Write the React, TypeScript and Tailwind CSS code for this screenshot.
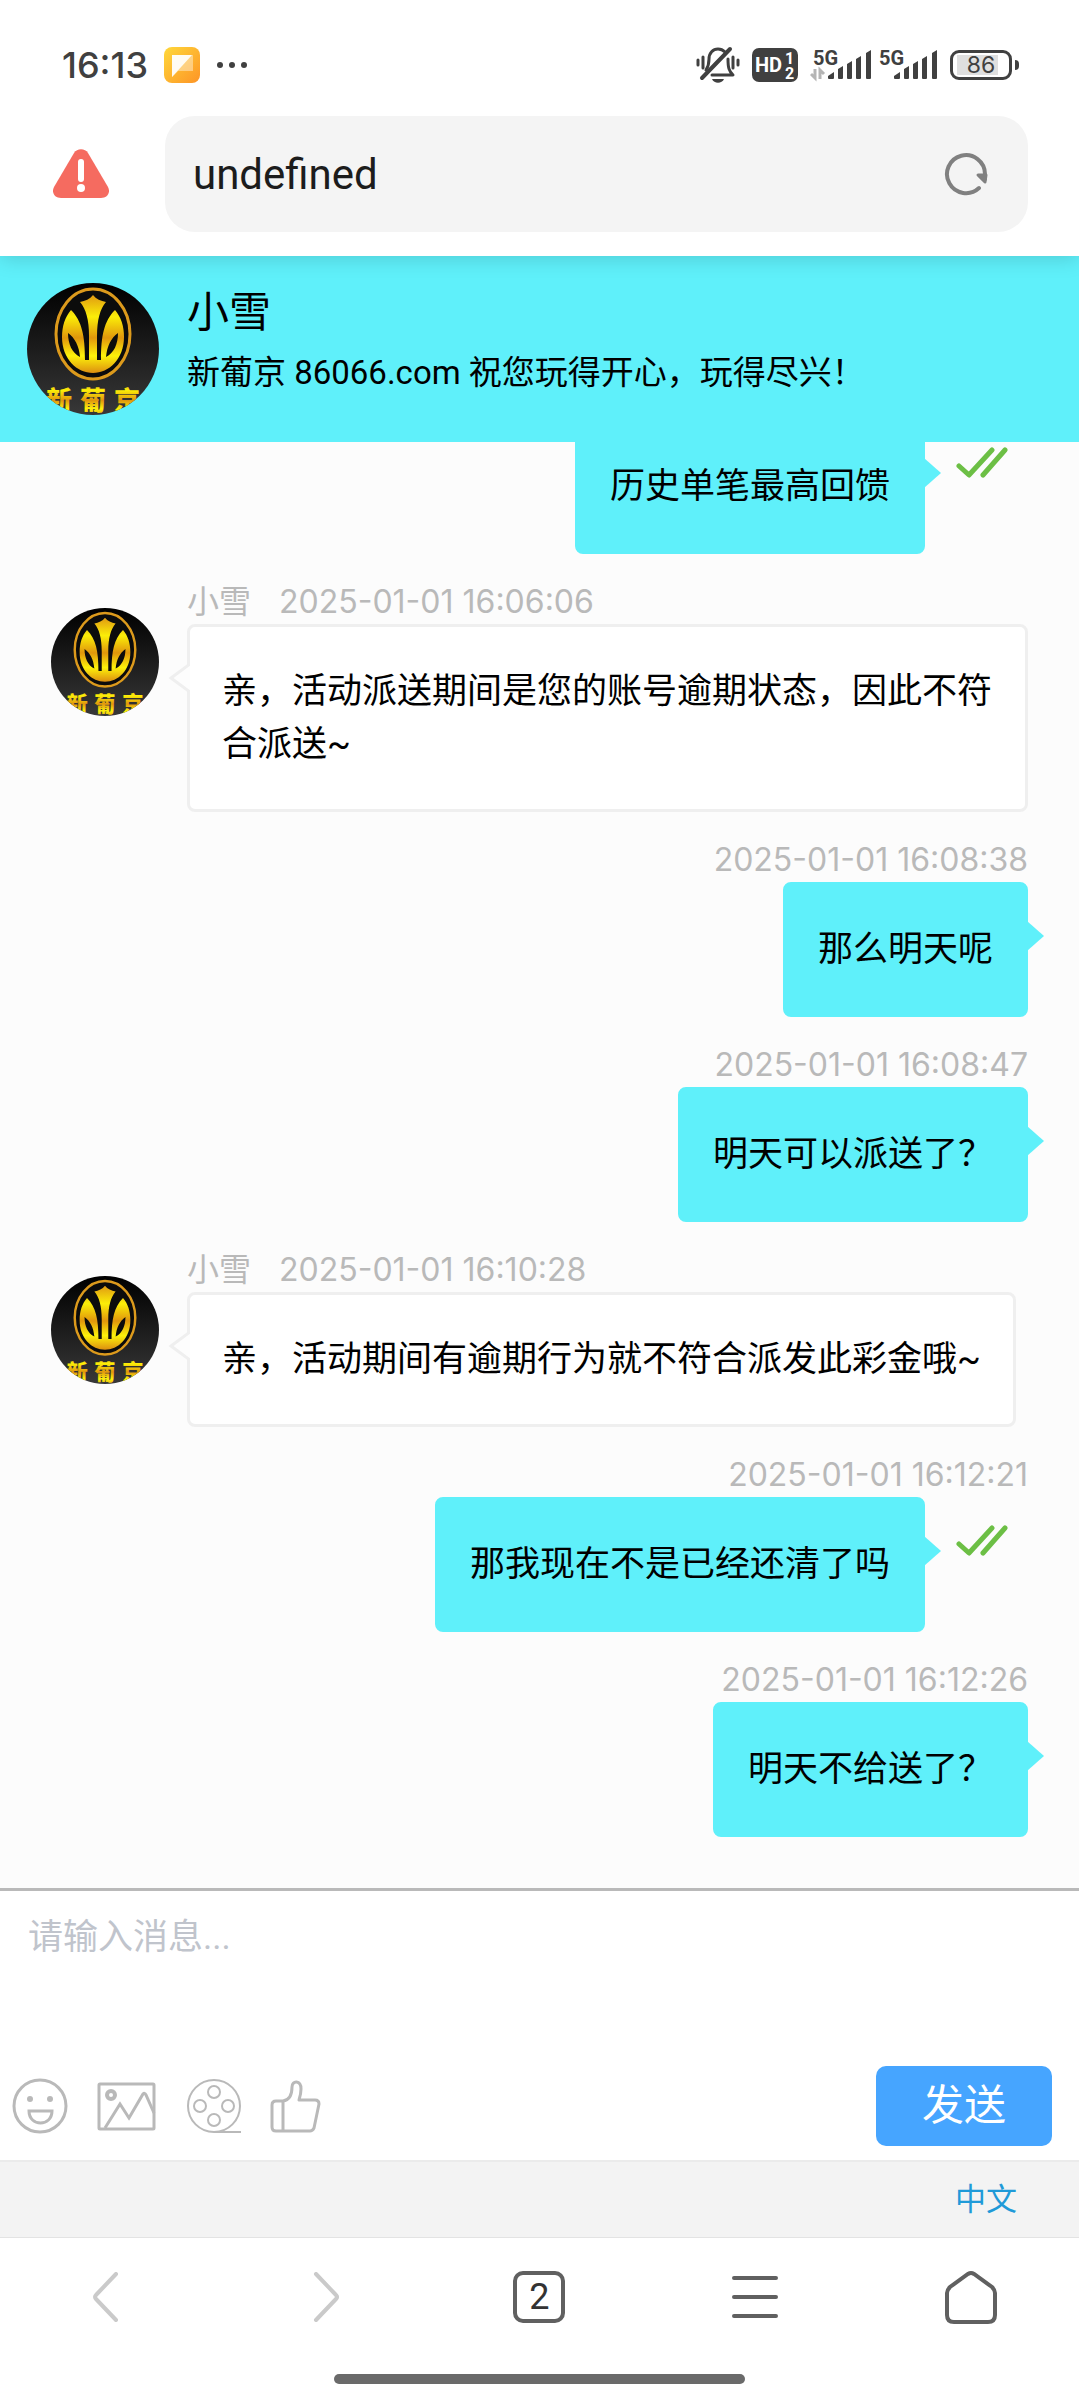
import { useId } from "react";
import clsx from "clsx";

type Message = {
  id: number;
  from: "agent" | "me";
  text: string;
  time?: string;
  read?: boolean;
};

const AGENT_NAME = "小雪";

const messages: Message[] = [
  { id: 1, from: "me", text: "历史单笔最高回馈", read: true },
  {
    id: 2,
    from: "agent",
    text: "亲，活动派送期间是您的账号逾期状态，因此不符合派送~",
    time: "2025-01-01 16:06:06",
  },
  { id: 3, from: "me", text: "那么明天呢", time: "2025-01-01 16:08:38" },
  { id: 4, from: "me", text: "明天可以派送了？", time: "2025-01-01 16:08:47" },
  {
    id: 5,
    from: "agent",
    text: "亲，活动期间有逾期行为就不符合派发此彩金哦~",
    time: "2025-01-01 16:10:28",
  },
  {
    id: 6,
    from: "me",
    text: "那我现在不是已经还清了吗",
    time: "2025-01-01 16:12:21",
    read: true,
  },
  { id: 7, from: "me", text: "明天不给送了？", time: "2025-01-01 16:12:26" },
];

function Avatar({ className }: { className?: string }) {
  const id = useId();
  const gold = `${id}-gold`;
  const night = `${id}-night`;
  return (
    <svg
      viewBox="0 0 132 132"
      className={clsx("shrink-0 rounded-full", className)}
      aria-hidden="true"
    >
      <defs>
        <linearGradient id={gold} x1="0" y1="0" x2="0" y2="1">
          <stop offset="0" stopColor="#e09a12" />
          <stop offset="0.28" stopColor="#fbee08" />
          <stop offset="0.55" stopColor="#e0960c" />
          <stop offset="0.78" stopColor="#fdf20a" />
          <stop offset="1" stopColor="#dc8f10" />
        </linearGradient>
        <linearGradient id={night} x1="0" y1="0" x2="0" y2="1">
          <stop offset="0" stopColor="#000" />
          <stop offset="1" stopColor="#383838" />
        </linearGradient>
      </defs>
      <rect width="132" height="132" fill={`url(#${night})`} />
      <ellipse
        cx="66"
        cy="51"
        rx="37"
        ry="45"
        fill="#0c0c0c"
        stroke="#dc9a1c"
        strokeWidth="3"
      />
      <path
        fill={`url(#${gold})`}
        d="M66 12c3 4 8 6 13 7-6 7-9 18-9 34v24h4c0-24 3-39 14-50 6 7 9 16 9 27 0 22-15 36-31 36S35 76 35 54c0-11 3-20 9-27 11 11 14 26 14 50h4V53c0-16-3-27-9-34 5-1 10-3 13-7z"
      />
      <path
        fill="#0c0c0c"
        d="M41 50c7 5 11 13 12 24-8-4-12-13-12-24zM91 50c-7 5-11 13-12 24 8-4 12-13 12-24z"
      />
      <g
        fill={`url(#${gold})`}
        fontFamily='"Noto Sans CJK SC", sans-serif'
        fontWeight="900"
        fontSize="26"
        textAnchor="middle"
      >
        <text x="32" y="127">
          新
        </text>
        <text x="66" y="127">
          葡
        </text>
        <text x="100" y="127">
          京
        </text>
      </g>
    </svg>
  );
}

function SignalIcon({ transfer }: { transfer?: boolean }) {
  return (
    <svg width="62" height="42" viewBox="0 -4 62 42" fill="#404040">
      <text
        x="3"
        y="17"
        fontFamily="Roboto, sans-serif"
        fontWeight="700"
        fontSize="20"
      >
        5G
      </text>
      {transfer ? (
        <path
          d="M5 21v9L1 26M10 31v-9l4 4"
          fill="none"
          stroke="#b5b5b5"
          strokeWidth="3"
        />
      ) : null}
      <path d="M18 28l6-4v6q0 1-1 1h-4q-1 0-1-1zM28 21l5-3v12q0 1-1 1h-3q-1 0-1-1zM37 16l5-3v17q0 1-1 1h-3q-1 0-1-1zM46 11l5-3v22q0 1-1 1h-3q-1 0-1-1zM56 5l5-3v28q0 1-1 1h-3q-1 0-1-1z" />
    </svg>
  );
}

function StatusBar() {
  return (
    <div className="flex h-[116px] items-center justify-between pt-[14px] pr-[60px] pl-[62px] text-[#404040]">
      <div className="flex items-center">
        <span className="font-[Inter] text-[36px] leading-[40px] font-medium">
          16:13
        </span>
        <svg
          className="ml-4"
          width="36"
          height="36"
          viewBox="0 0 36 36"
          aria-hidden="true"
        >
          <defs>
            <linearGradient id="note" x1="0" y1="0" x2="1" y2="1">
              <stop offset="0" stopColor="#ffd83a" />
              <stop offset="1" stopColor="#fd9426" />
            </linearGradient>
          </defs>
          <rect width="36" height="36" rx="8" fill="url(#note)" />
          <path d="M8 8h21v16H14l-6 6z" fill="#fff" opacity="0.4" />
          <path d="M8 8h20L8 30z" fill="#fff" opacity="0.9" />
        </svg>
        <svg className="ml-4" width="32" height="8" fill="#404040">
          <circle cx="4" cy="4" r="3" />
          <circle cx="16" cy="4" r="3" />
          <circle cx="28" cy="4" r="3" />
        </svg>
      </div>
      <div className="flex items-center">
        <svg width="44" height="38" viewBox="0 0 44 38" fill="none">
          <g stroke="#404040" strokeWidth="3" strokeLinecap="round">
            <path d="M2 14v5M7 11v11M37 11v11M42 14v5" />
            <path d="M6 32L34 3" strokeWidth="4" />
            <path
              d="M10 24c2-3 3-5 3-11 0-6 4-10 9-10 3 0 5 1 7 3M32 13c0 9 1 12 5 16H16"
              strokeLinejoin="round"
            />
          </g>
          <path d="M16 33h12c-2 5-10 5-12 0z" fill="#404040" />
        </svg>
        <svg className="ml-3" width="46" height="34" viewBox="0 0 46 34">
          <rect width="46" height="34" rx="7" fill="#404040" />
          <g fill="#fff" fontFamily="Roboto, sans-serif" fontWeight="700">
            <text x="3" y="24" fontSize="20">
              HD
            </text>
            <text x="33" y="16" fontSize="16">
              1
            </text>
            <text x="33" y="31" fontSize="16">
              2
            </text>
          </g>
        </svg>
        <div className="ml-3 flex gap-1">
          <SignalIcon transfer />
          <SignalIcon />
        </div>
        <div className="ml-3 flex items-center gap-[3px]">
          <div className="flex h-[30px] w-[62px] items-center justify-center rounded-[9px] border-3 border-[#404040] p-1">
            <span className="h-[20px] w-full bg-linear-to-r from-[#dfdfdf] from-86% to-white to-86% text-center font-[Inter] text-[23px] leading-[20px]">
              86
            </span>
          </div>
          <div className="h-[10px] w-1 rounded-r bg-[#404040]" />
        </div>
      </div>
    </div>
  );
}

function AddressBar() {
  return (
    <div className="flex items-center pr-[51px] pb-6 pl-[53px]">
      <svg width="56" height="50" viewBox="0 0 56 50" aria-hidden="true">
        <path
          fill="#f56b60"
          d="M21 4c3-5 11-5 14 0l20 34c3 6-1 11-7 11H8c-6 0-10-5-7-11z"
        />
        <path
          d="M28 13v17"
          stroke="#fff"
          strokeWidth="6"
          strokeLinecap="round"
        />
        <circle cx="28" cy="39" r="4" fill="#fff" />
      </svg>
      <div className="ml-14 flex h-[116px] flex-1 items-center rounded-[30px] bg-[#f4f4f4] pr-10 pl-7">
        <input
          aria-label="地址"
          defaultValue="undefined"
          className="min-w-0 flex-1 bg-transparent text-[42px] text-[#1c1c1c] outline-none"
        />
        <button type="button" aria-label="刷新">
          <svg width="44" height="44" viewBox="0 0 44 44" fill="none">
            <path
              d="M35 36A19 19 0 1 1 41 22v5"
              stroke="#808080"
              strokeWidth="4"
              strokeLinecap="round"
            />
            <path
              d="M34 23h8l-1 7z"
              fill="#808080"
              stroke="#808080"
              strokeWidth="3"
              strokeLinejoin="round"
            />
          </svg>
        </button>
      </div>
    </div>
  );
}

function ReadMark() {
  return (
    <svg
      className="mt-7 mr-5 ml-[31px] shrink-0"
      width="52"
      height="32"
      viewBox="0 0 52 32"
      fill="none"
      stroke="#6cbf45"
      strokeWidth="5"
      strokeLinecap="round"
      strokeLinejoin="round"
      aria-label="已读"
    >
      <path d="M3 19l10 9L36 3M49 3L27 28" />
    </svg>
  );
}

function Bubble({ message }: { message: Message }) {
  const mine = message.from === "me";
  return (
    <div
      className={clsx(
        "relative rounded-lg border-3 px-8 py-[38px] text-[35px] leading-[53px] text-black",
        mine ? "border-[#5ff0fa] bg-[#5ff0fa]" : "border-[#efefef] bg-white"
      )}
    >
      <p>{message.text}</p>
      {mine ? (
        <svg
          className="absolute top-9 -right-[19px]"
          width="17"
          height="30"
          viewBox="0 0 17 30"
        >
          <path d="M0 0l17 15L0 30z" fill="#5ff0fa" />
        </svg>
      ) : (
        <svg
          className="absolute top-[35px] -left-[22px]"
          width="22"
          height="32"
          viewBox="0 0 22 32"
        >
          <path
            d="M22 2L3 16l19 14"
            fill="#fdfdfd"
            stroke="#efefef"
            strokeWidth="3"
          />
        </svg>
      )}
    </div>
  );
}

function MessageRow({ message }: { message: Message }) {
  const mine = message.from === "me";
  return (
    <li className={clsx("flex", mine && "justify-end")}>
      {mine ? null : <Avatar className="mt-7 mr-7 size-[108px]" />}
      <div className={clsx("flex flex-col", mine ? "items-end" : "items-start")}>
        {message.time ? (
          <div className="flex h-11 items-center gap-7 leading-[44px] text-[#b9b9b9]">
            {mine ? null : <span className="text-[32px]">{AGENT_NAME}</span>}
            <time className="font-[Inter] text-[32px]">{message.time}</time>
          </div>
        ) : null}
        <div className="flex items-start">
          <Bubble message={message} />
          {message.read ? <ReadMark /> : null}
        </div>
      </div>
    </li>
  );
}

function ChatHeader() {
  return (
    <header className="flex h-[186px] shrink-0 items-center gap-7 bg-[#5ff0fa] px-[27px] text-black">
      <Avatar className="size-[132px]" />
      <div className="pb-4">
        <h1 className="text-[42px] leading-[64px]">{AGENT_NAME}</h1>
        <p className="text-[33px] leading-[56px]">
          新葡京 86066.com 祝您玩得开心，玩得尽兴！
        </p>
      </div>
    </header>
  );
}

function Composer() {
  return (
    <form
      className="shrink-0 border-t-3 border-[#b9b9b9] bg-white"
      onSubmit={(e) => e.preventDefault()}
    >
      <textarea
        aria-label="消息"
        placeholder="请输入消息..."
        className="block h-[175px] w-full resize-none px-7 pt-5 text-[35px] leading-[53px] outline-none placeholder:text-[#c0c4cc]"
      />
      <div className="flex h-[94px] items-start justify-between pr-[27px] pl-3">
        <div className="flex h-20 items-center gap-7 text-[#b9b9b9]">
          <button type="button" aria-label="表情">
            <svg
              width="56"
              height="56"
              viewBox="0 0 56 56"
              fill="none"
              stroke="currentColor"
              strokeWidth="3"
            >
              <circle cx="28" cy="28" r="26" />
              <circle cx="18" cy="21" r="3" fill="currentColor" stroke="none" />
              <circle cx="38" cy="21" r="3" fill="currentColor" stroke="none" />
              <path d="M17 33h23c0 16-23 16-23 0z" />
            </svg>
          </button>
          <button type="button" aria-label="图片">
            <svg
              width="62"
              height="50"
              viewBox="0 0 62 50"
              fill="none"
              stroke="currentColor"
              strokeWidth="3"
            >
              <rect x="3" y="3" width="55" height="45" rx="1" />
              <circle cx="15" cy="14" r="4" strokeWidth="4" />
              <path d="M9 47l15-24 9 14 14-24c1-1 2-1 3 1l8 18" />
            </svg>
          </button>
          <button type="button" aria-label="视频">
            <svg
              width="56"
              height="56"
              viewBox="0 0 56 56"
              fill="none"
              stroke="currentColor"
              strokeWidth="2"
            >
              <circle cx="28" cy="28" r="26" />
              <circle cx="28" cy="14" r="6" />
              <circle cx="28" cy="42" r="6" />
              <circle cx="14" cy="28" r="6" />
              <circle cx="42" cy="28" r="6" />
              <path d="M28 54h27" />
            </svg>
          </button>
          <button type="button" aria-label="点赞">
            <svg
              width="52"
              height="54"
              viewBox="0 0 52 54"
              fill="none"
              stroke="currentColor"
              strokeWidth="3"
              strokeLinejoin="round"
            >
              <path d="M6 22h7c7-1 9-6 9-14 0-7 9-7 9 2 0 4-1 8-2 11h16c3 0 4 2 4 4l-5 24c-1 2-2 3-4 3H6c-2 0-4-1-4-4V26c0-3 2-4 4-4zM13 22v30" />
            </svg>
          </button>
        </div>
        <button
          type="submit"
          className="h-20 rounded-[10px] bg-[#46a5ff] px-[46px] text-[42px] leading-[80px] text-white"
        >
          发送
        </button>
      </div>
    </form>
  );
}

function BrowserNav() {
  return (
    <nav className="shrink-0 border-t border-[#e3e3e3] bg-white pb-4">
      <div className="grid h-[118px] grid-cols-5 place-items-center text-[#606060]">
        <button type="button" aria-label="后退" className="text-[#cacaca]">
          <svg width="32" height="50" viewBox="0 0 32 50" fill="none">
            <path
              d="M24 2L4 23q-2 2 0 4l20 21"
              stroke="currentColor"
              strokeWidth="4"
              strokeLinecap="round"
            />
          </svg>
        </button>
        <button type="button" aria-label="前进" className="text-[#cacaca]">
          <svg width="32" height="50" viewBox="0 0 32 50" fill="none">
            <path
              d="M8 2l20 21q2 2 0 4L8 48"
              stroke="currentColor"
              strokeWidth="4"
              strokeLinecap="round"
            />
          </svg>
        </button>
        <button
          type="button"
          aria-label="标签页"
          className="size-[52px] rounded-[10px] border-4 border-[#606060] text-[36px] leading-[44px] text-[#333]"
        >
          2
        </button>
        <button type="button" aria-label="菜单">
          <svg
            width="46"
            height="44"
            viewBox="0 0 46 44"
            stroke="currentColor"
            strokeWidth="4"
            strokeLinecap="round"
          >
            <path d="M2 3h42M2 22h42M2 41h42" />
          </svg>
        </button>
        <button type="button" aria-label="主页">
          <svg
            width="52"
            height="54"
            viewBox="0 0 52 54"
            fill="none"
            stroke="currentColor"
            strokeWidth="4"
          >
            <path d="M23 4q3-2 6 0l18 13q3 3 3 6v22q0 7-7 7H9q-7 0-7-7V23q0-3 3-6z" />
          </svg>
        </button>
      </div>
      <div className="mx-auto mt-[18px] h-[10px] w-[38%] rounded-full bg-[#6a6a6a]" />
    </nav>
  );
}

export default function App() {
  return (
    <div className="flex h-screen flex-col bg-[#fcfcfc] font-[Roboto,'Noto_Sans_CJK_SC',sans-serif]">
      <div className="relative z-10 shrink-0 bg-white shadow-[0_2px_20px_rgba(0,0,0,0.16)]">
        <StatusBar />
        <AddressBar />
      </div>
      <ChatHeader />
      <main className="flex min-h-0 flex-1 flex-col justify-end overflow-hidden">
        <ul className="flex flex-col gap-[26px] px-[51px] pb-[51px]">
          {messages.map((message) => (
            <MessageRow key={message.id} message={message} />
          ))}
        </ul>
      </main>
      <Composer />
      <div className="flex h-[77px] shrink-0 items-center justify-end border-t-2 border-[#ebebeb] bg-[#f3f3f3] px-[62px]">
        <a href="#language" className="text-[31px] leading-[40px] text-[#1f9ad8]">
          中文
        </a>
      </div>
      <BrowserNav />
    </div>
  );
}
